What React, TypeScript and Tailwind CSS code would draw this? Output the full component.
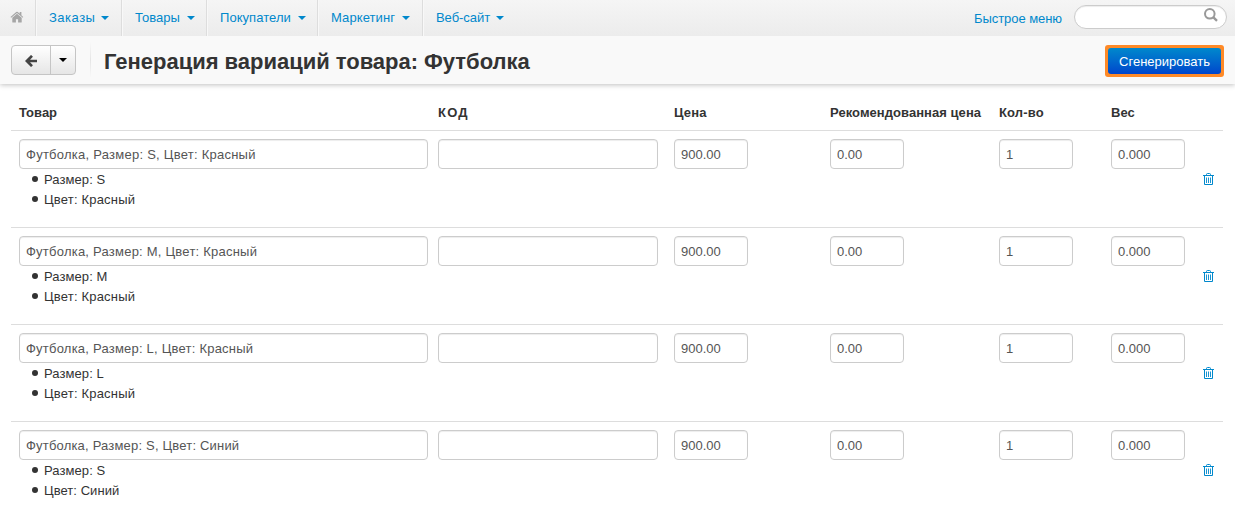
import React from "react";

type Variation = { name: string; size: string; color: string; tracking: string };

const variations: Variation[] = [
  { name: "Футболка, Размер: S, Цвет: Красный", size: "S", color: "Красный", tracking: "tracking-[0.25px]" },
  { name: "Футболка, Размер: M, Цвет: Красный", size: "M", color: "Красный", tracking: "tracking-[0.23px]" },
  { name: "Футболка, Размер: L, Цвет: Красный", size: "L", color: "Красный", tracking: "tracking-[0.22px]" },
  { name: "Футболка, Размер: S, Цвет: Синий", size: "S", color: "Синий", tracking: "tracking-[0.19px]" },
];

const menu = [
  { label: "Заказы", box: "w-[86px]", text: "w-[46px] tracking-[0.5px]" },
  { label: "Товары", box: "w-[85px]", text: "w-[46px]" },
  { label: "Покупатели", box: "w-[111px]", text: "w-[72px] tracking-[0.05px]" },
  { label: "Маркетинг", box: "w-[105px]", text: "w-[65px] tracking-[0.1px]" },
  { label: "Веб-сайт", box: "w-[86px]", text: "w-[54px] tracking-[-0.05px]" },
];

const columns =
  "grid grid-cols-[419px_236px_156px_169px_112px_92px_20px] pl-2";

function Caret({ className }: { className: string }) {
  return (
    <svg viewBox="0 0 8 4" className={`h-1 w-2 shrink-0 ${className}`} fill="currentColor">
      <path d="M0 0h8L4 4z" />
    </svg>
  );
}

function HomeIcon() {
  return (
    <svg viewBox="0 0 14 12" className="mb-[2px] ml-[10px] h-3 w-[14px]" fill="#a6a6a6">
      <path d="M7 2.8 2.3 6.8V11a.6.6 0 0 0 .6.6h3V8.2h2.2v3.4h3a.6.6 0 0 0 .6-.6V6.8z" />
      <path d="m13.2 5.9-1.8-1.6V1H9.7v1.7L7.8 1a1.2 1.2 0 0 0-1.6 0L.5 5.9l.7.8L7 1.9l5.8 4.8z" />
    </svg>
  );
}

function TrashIcon() {
  return (
    <svg viewBox="0 0 11 13" className="h-[13px] w-[11px]" fill="none" stroke="#0088cc">
      <path d="M0 2.5h11M3.5 2.5v-1q0-1 1-1h2q1 0 1 1v1M1.5 2.5v9h8v-9" />
      <path d="M3.5 4.5v5.5M5.5 4.5v5.5M7.5 4.5v5.5" strokeWidth=".9" />
    </svg>
  );
}

function Field({
  value,
  width,
  label,
  tracking = "",
}: {
  value: string;
  width: string;
  label: string;
  tracking?: string;
}) {
  return (
    <input
      aria-label={label}
      defaultValue={value}
      className={`block h-[30px] rounded-[4px] border border-[#ccc] bg-white px-[6px] pt-[1px] text-[13px] text-[#555] shadow-[inset_0_1px_1px_rgba(0,0,0,0.075)] outline-none ${width} ${tracking}`}
    />
  );
}

export default function App() {
  return (
    <div className="h-[515px] w-[1235px] overflow-hidden bg-white font-['Liberation_Sans',Arial,sans-serif] text-[13px] leading-5 text-[#333]">
      <nav className="flex h-9 bg-linear-to-b from-[#f5f5f5] to-[#ececec] text-[#0088cc]">
        <div className="flex w-9 items-center border-r border-[#ddd]">
          <HomeIcon />
        </div>
        {menu.map((item, i) => (
          <div
            key={item.label}
            className={`flex items-center border-l border-l-[#f8f8f8] pl-3 ${item.box} ${
              i < menu.length - 1 ? "border-r border-r-[#ddd]" : ""
            }`}
          >
            <span className={`shrink-0 whitespace-nowrap ${item.text}`}>{item.label}</span>
            <Caret className="ml-[6px]" />
          </div>
        ))}
        <div className="ml-auto flex pr-2">
          <span className="mt-[9px] mr-3 w-[88px] tracking-[-0.06px] whitespace-nowrap">Быстрое меню</span>
          <div className="mt-[5px] flex h-6 w-[153px] justify-end rounded-full border border-[#ccc] bg-white pr-[8px] shadow-[inset_0_1px_1px_rgba(0,0,0,0.075)]">
            <svg viewBox="0 0 14 14" className="mt-[2px] h-[14px] w-[14px]" fill="none" stroke="#999" strokeWidth="2">
              <circle cx="5.8" cy="5.8" r="4.8" />
              <path d="m9.2 9.2 3.8 3.6" strokeWidth="2.4" />
            </svg>
          </div>
        </div>
      </nav>

      <header className="relative flex h-12 items-center bg-[#f9f9f9] pr-[11px] pl-[11px] shadow-[0_1px_5px_rgba(0,0,0,0.25)] [clip-path:inset(0_0_-8px_0)]">
        <div className="flex h-[30px] w-[65px] rounded-[4px] border border-[#c5c5c5] bg-linear-to-b from-white to-[#e6e6e6]">
          <button aria-label="Назад" className="flex w-[39px] items-center justify-center border-r border-[#c5c5c5]">
            <svg viewBox="0 0 12 12" className="mt-[2px] h-3 w-3" fill="none" stroke="#444" strokeWidth="2.7">
              <path d="M12 6H2M7 .9 1.9 6 7 11.1" />
            </svg>
          </button>
          <button aria-label="Меню" className="flex flex-1 items-center justify-center text-black">
            <Caret className="" />
          </button>
        </div>
        <div className="ml-[14px] h-9 w-px bg-linear-to-b from-[#f9f9f9] via-[#e5e5e5] to-[#f9f9f9]" />
        <h1 className="ml-[13px] pt-[3px] text-[22px] leading-6 font-bold tracking-[-0.02px] whitespace-nowrap">
          Генерация вариаций товара: Футболка
        </h1>
        <div className="mt-[2px] ml-auto h-8 w-[119px] rounded-[3px] bg-[#ff8a27] p-[3px]">
          <button className="flex h-[26px] w-full items-center justify-center rounded-[3px] bg-linear-to-b from-[#0088cc] to-[#0044cc] pt-[2px] whitespace-nowrap text-white">
            Сгенерировать
          </button>
        </div>
      </header>

      <main className="mr-3 ml-[11px] pt-[19px]">
        <div className={`h-[27px] font-bold whitespace-nowrap ${columns}`}>
          <span>Товар</span>
          <span className="tracking-[1.2px]">КОД</span>
          <span className="tracking-[0.2px]">Цена</span>
          <span className="tracking-[0.05px]">Рекомендованная цена</span>
          <span className="tracking-[0.15px]">Кол-во</span>
          <span>Вес</span>
        </div>
        {variations.map((v) => (
          <div key={v.name} className={`h-[97px] border-t border-[#ddd] pt-2 ${columns}`}>
            <div>
              <Field label="Товар" value={v.name} width="w-[409px]" tracking={v.tracking} />
              <ul className="ml-[25px] list-none">
                <li className="flex h-5 items-center">
                  <span className="mr-[6px] -ml-[12px] h-[6px] w-[6px] rounded-full bg-[#333]" />
                  <span className="pt-[2px] tracking-[0.08px]">{`Размер: ${v.size}`}</span>
                </li>
                <li className="flex h-5 items-center">
                  <span className="mr-[6px] -ml-[12px] h-[6px] w-[6px] rounded-full bg-[#333]" />
                  <span className={`pt-[2px] ${v.color === "Красный" ? "tracking-[0.19px]" : "tracking-[0.05px]"}`}>
                    {`Цвет: ${v.color}`}
                  </span>
                </li>
              </ul>
            </div>
            <Field label="КОД" value="" width="w-[220px]" />
            <Field label="Цена" value="900.00" width="w-[74px]" />
            <Field label="Рекомендованная цена" value="0.00" width="w-[74px]" />
            <Field label="Кол-во" value="1" width="w-[74px]" />
            <Field label="Вес" value="0.000" width="w-[74px]" />
            <button aria-label="Удалить" className="mt-[34px] h-[13px] w-[11px]">
              <TrashIcon />
            </button>
          </div>
        ))}
      </main>
    </div>
  );
}
